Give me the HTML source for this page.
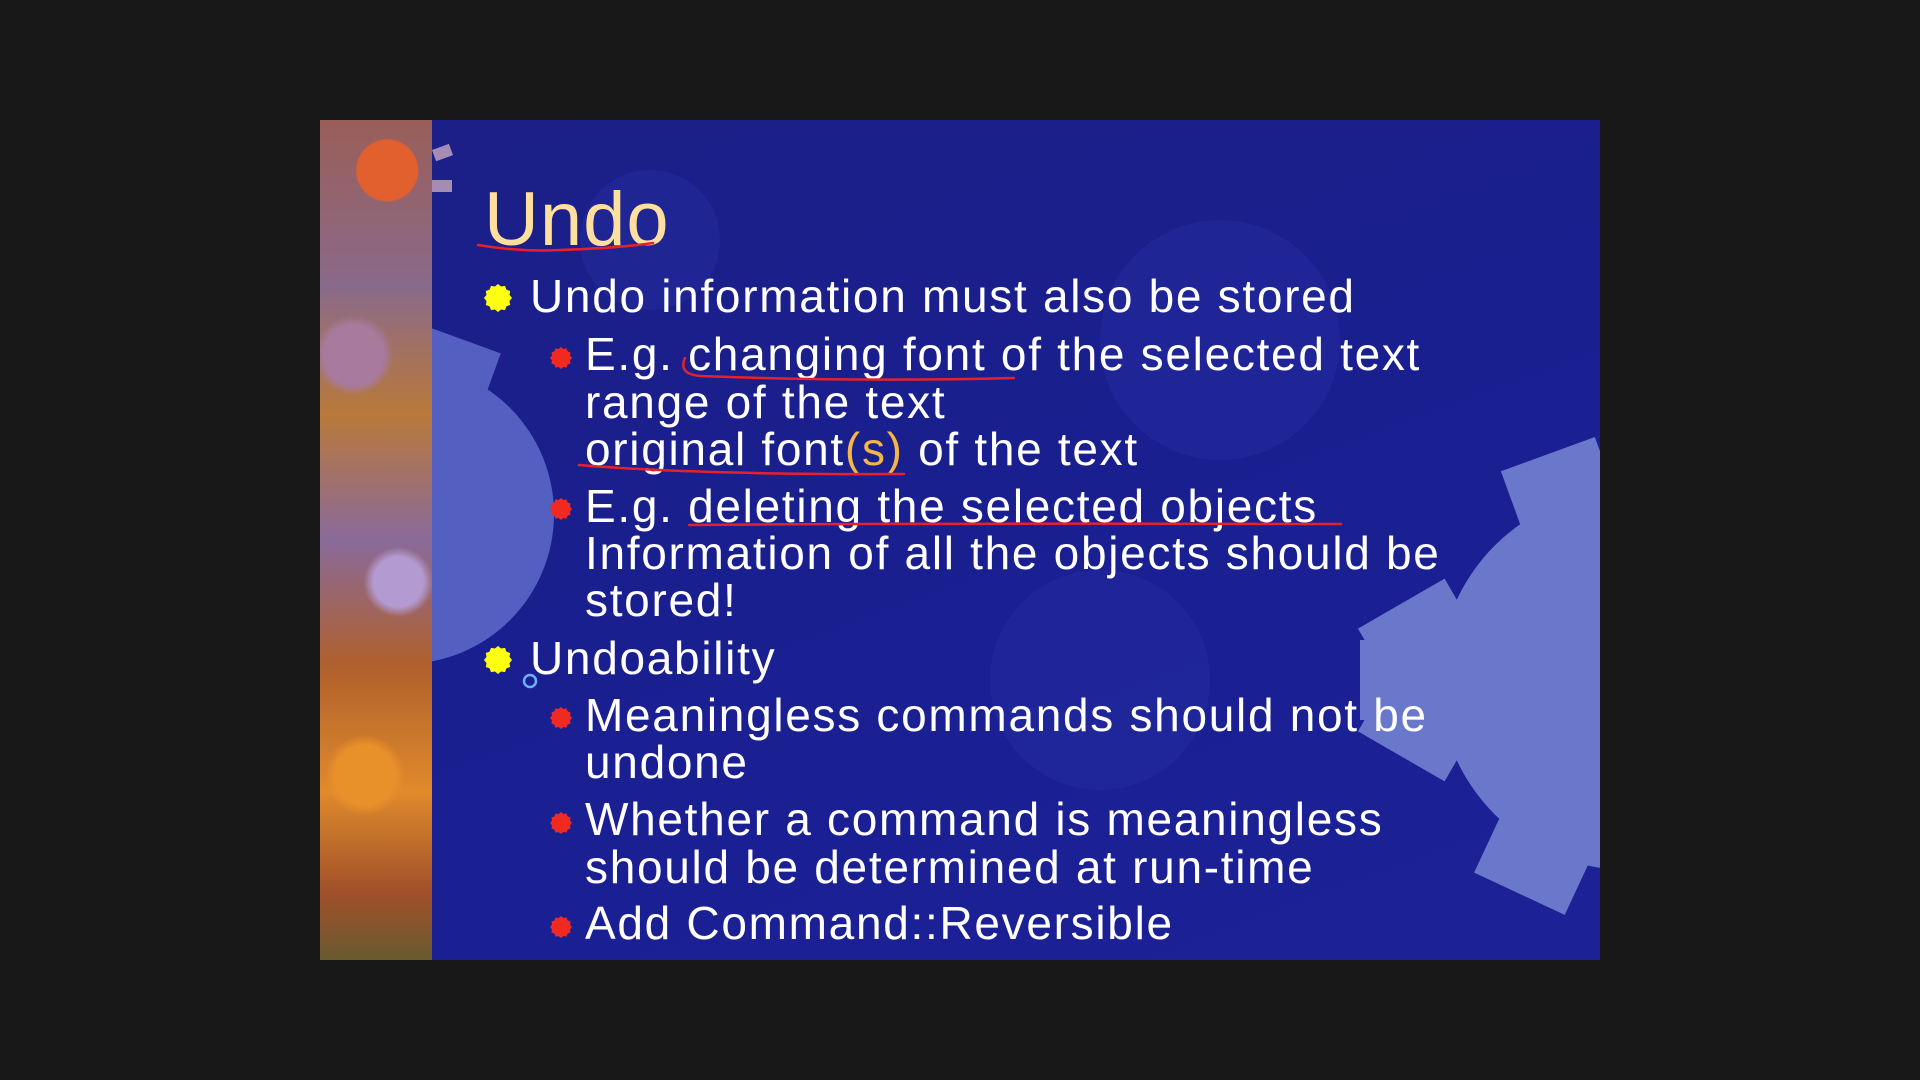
<!DOCTYPE html>
<html><head><meta charset="utf-8"><style>
body{margin:0;width:1920px;height:1080px;background:#181818;overflow:hidden;font-family:"Liberation Sans",Arial,sans-serif}
#s{position:absolute;left:320px;top:120px;width:1280px;height:840px;overflow:hidden;background:linear-gradient(160deg,#1b1f86 0%,#1a1f92 60%,#1c2296 100%)}
#strip{position:absolute;left:0;top:0;width:112px;height:840px;background:
radial-gradient(circle at 60% 6%,#e2602e 0 30px,transparent 32px),
radial-gradient(circle at 30% 28%,#a87a9e 0 30px,transparent 40px),
radial-gradient(circle at 70% 55%,#b39ad0 0 25px,transparent 35px),
radial-gradient(circle at 40% 78%,#e8902a 0 30px,transparent 40px),
linear-gradient(180deg,#9a5e58 0%,#8a6a8a 20%,#b9793a 35%,#8a6a9a 50%,#b0602c 65%,#e08a2c 80%,#a0502a 92%,#6a5a30 100%)}
.t{position:absolute;color:#fff;font-size:46px;line-height:46px;white-space:nowrap;letter-spacing:1.7px}
</style></head><body>
<div id="s">
<svg width="1280" height="840" style="position:absolute;left:0;top:0">
<g fill="#2a36a8" opacity=".3">
<circle cx="900" cy="220" r="120"/><circle cx="330" cy="120" r="70"/><circle cx="780" cy="560" r="110"/>
</g>
<g fill="#5360c2">
<circle cx="84" cy="394" r="150"/>
<rect x="40" y="210" width="80" height="60" transform="rotate(20 84 394)"/>
</g>
<g fill="#6a78cc">
<circle cx="1309" cy="560" r="190"/>
<rect x="1040" y="520" width="120" height="80"/>
<rect x="1260" y="320" width="100" height="100" transform="rotate(-20 1309 560)"/>
<rect x="1250" y="700" width="100" height="100" transform="rotate(25 1309 560)"/>
<rect x="1100" y="380" width="100" height="90" transform="rotate(-30 1309 560)"/>
<rect x="1100" y="650" width="100" height="90" transform="rotate(30 1309 560)"/>
</g>
<g fill="#c8a8c0" opacity=".8"><rect x="112" y="30" width="18" height="12" transform="rotate(-20 112 30)"/><rect x="112" y="60" width="20" height="12"/></g>
</svg>
<div id="strip"></div>
<div class="t" style="left:164px;top:62px;font-size:76px;line-height:76px;color:#ffdf9e;letter-spacing:1px">Undo</div>
<div class="t" style="left:210px;top:153px">Undo information must also be stored</div>
<div class="t" style="left:265px;top:211px">E.g. changing font of the selected text</div>
<div class="t" style="left:265px;top:259px">range of the text</div>
<div class="t" style="left:265px;top:306px">original font<span style="color:#f5b547">(s)</span> of the text</div>
<div class="t" style="left:265px;top:363px">E.g. deleting the selected objects</div>
<div class="t" style="left:265px;top:410px">Information of all the objects should be</div>
<div class="t" style="left:265px;top:457px">stored!</div>
<div class="t" style="left:210px;top:515px">Undoability</div>
<div class="t" style="left:265px;top:572px">Meaningless commands should not be</div>
<div class="t" style="left:265px;top:619px">undone</div>
<div class="t" style="left:265px;top:676px">Whether a command is meaningless</div>
<div class="t" style="left:265px;top:724px">should be determined at run-time</div>
<div class="t" style="left:265px;top:780px">Add Command::Reversible</div>
<svg width="1280" height="840" style="position:absolute;left:0;top:0">
<defs>
<polygon id="st" points="0,-1 .22,-.82 .5,-.87 .6,-.6 .87,-.5 .82,-.22 1,0 .82,.22 .87,.5 .6,.6 .5,.87 .22,.82 0,1 -.22,.82 -.5,.87 -.6,.6 -.87,.5 -.82,.22 -1,0 -.82,-.22 -.87,-.5 -.6,-.6 -.5,-.87 -.22,-.82"/>
</defs>
<g fill="#ffff10"><use href="#st" transform="translate(178,178) scale(14)"/><use href="#st" transform="translate(178,540) scale(14)"/></g>
<g fill="#f02a20"><use href="#st" transform="translate(241,238) scale(11)"/><use href="#st" transform="translate(241,389) scale(11)"/><use href="#st" transform="translate(241,598) scale(11)"/><use href="#st" transform="translate(241,703) scale(11)"/><use href="#st" transform="translate(241,807) scale(11)"/></g>
<g fill="none" stroke="#e8202a" stroke-width="2.5" stroke-linecap="round">
<path d="M158,125 Q200,132 240,130 Q300,128 333,123"/>
<path d="M365,238 Q358,254 380,256 Q540,262 694,258"/>
<path d="M259,345 Q380,355 584,354"/>
<path d="M369,405 Q600,403 1021,404"/>
</g>
<circle cx="210" cy="561" r="6" fill="none" stroke="#6ab0ff" stroke-width="2.5"/>
</svg>
</div>
</body></html>
